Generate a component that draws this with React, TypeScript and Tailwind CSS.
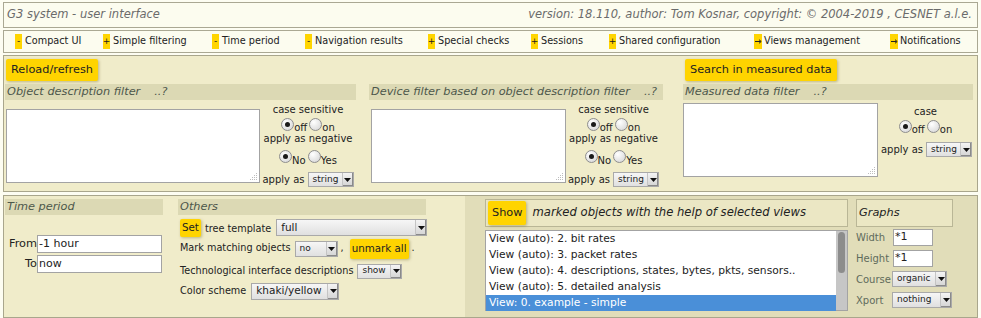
import React from 'react';

const nav = [
  { s: '-', t: 'Compact UI', w: 'w-[88px]' },
  { s: '+', t: 'Simple filtering', w: 'w-[109px]' },
  { s: '-', t: 'Time period', w: 'w-[93px]' },
  { s: '-', t: 'Navigation results', w: 'w-[123px]' },
  { s: '+', t: 'Special checks', w: 'w-[103px]' },
  { s: '+', t: 'Sessions', w: 'w-[78px]' },
  { s: '+', t: 'Shared configuration', w: 'w-[145px]' },
  { s: '→', t: 'Views management', w: 'w-[136px]' },
  { s: '→', t: 'Notifications', w: 'w-auto' },
];

const views = [
  'View (auto): 2. bit rates',
  'View (auto): 3. packet rates',
  'View (auto): 4. descriptions, states, bytes, pkts, sensors..',
  'View (auto): 5. detailed analysis',
];

function Select({ text, className, textCls = 'text-[9px]' }: { text: string; className: string; textCls?: string }) {
  return (
    <div className={`flex shrink-0 items-stretch border border-[#a9a9a9] bg-linear-to-b from-[#f6f6f6] to-[#e0e0e0] ${className}`}>
      <span className={`flex flex-1 items-center pl-[4px] whitespace-nowrap text-[#222] ${textCls}`}>{text}</span>
      <span className="flex w-[11px] items-center justify-center border-l border-[#c4c4c4] bg-linear-to-b from-[#f4f4f4] to-[#d4d4d4] shadow-[inset_-1px_-1px_0_#8a8a8a]">
        <svg width="7" height="4" viewBox="0 0 7 4">
          <path d="M0 0h7L3.5 4z" fill="#111" />
        </svg>
      </span>
    </div>
  );
}

const Radio = ({ on }: { on?: boolean }) => (
  <span className="inline-flex h-[13px] w-[13px] shrink-0 items-center justify-center rounded-full border border-[#8e8e8e] bg-[radial-gradient(circle_at_35%_30%,#ffffff,#d2d2d2)]">
    {on && <span className="h-[5px] w-[5px] rounded-full bg-[#1a1a1a]" />}
  </span>
);

function RadioPair({ a, b }: { a: string; b: string }) {
  return (
    <div className="flex items-center">
      <Radio on />
      <span className="mt-[7px] mr-[2px]">{a}</span>
      <Radio />
      <span className="mt-[7px]">{b}</span>
    </div>
  );
}

const Grip = () => (
  <svg className="absolute right-[1px] bottom-[1px]" width="8" height="8" viewBox="0 0 8 8">
    {[[6, 0], [4, 2], [6, 2], [2, 4], [4, 4], [6, 4], [0, 6], [2, 6], [4, 6], [6, 6]].map(([x, y], i) => (
      <rect key={i} x={x} y={y} width="1" height="1" fill="#bdbdbd" />
    ))}
  </svg>
);

const Area = ({ className }: { className: string }) => (
  <div className={`relative border border-[#a3a3a3] bg-white ${className}`}>
    <Grip />
  </div>
);

const Btn = ({ children, className = '' }: { children: React.ReactNode; className?: string }) => (
  <span className={`flex shrink-0 items-center rounded-[2px] bg-[#ffd400] whitespace-nowrap text-[#222] shadow-[1px_1px_3px_rgba(90,80,0,0.35)] ${className}`}>
    {children}
  </span>
);

const LabelBar = ({ children, className }: { children: React.ReactNode; className: string }) => (
  <div className={`flex h-[16px] items-center bg-[#dcd9b4] pl-[2px] whitespace-nowrap text-[11.3px] text-[#4d574b] italic ${className}`}>
    {children}
  </div>
);

function Controls({ className }: { className: string }) {
  return (
    <div className={`flex flex-col items-center pt-[4px] text-[10px] text-[#222] ${className}`}>
      <div className="h-[12px] leading-[12px]">case sensitive</div>
      <div className="flex h-[16px] items-center">
        <RadioPair a="off" b="on" />
      </div>
      <div className="h-[14px] leading-[14px]">apply as negative</div>
      <div className="flex h-[21px] items-center">
        <RadioPair a="No" b="Yes" />
      </div>
      <div className="mt-[5px] flex items-center gap-[3px]">
        apply as
        <Select text="string" className="h-[15px] w-[46px]" />
      </div>
    </div>
  );
}

export default function App() {
  return (
    <div className="h-[318px] w-[981px] overflow-hidden bg-[#fdfdf2] px-[3px] pt-[2px] font-['DejaVu_Sans',sans-serif] text-[#222]">
      <div className="flex h-[26px] items-center justify-between border border-[#aaa893] bg-[#fcfcef] pr-[5px] pl-[3px] text-[11.5px] text-[#6b6b6b] italic">
        <span>G3 system - user interface</span>
        <span>version: 18.110, author: Tom Kosnar, copyright: © 2004-2019 , CESNET a.l.e.</span>
      </div>

      <div className="mt-[2px] flex h-[23px] items-center border border-[#aaa893] bg-[#fcfcef] pl-[11px] text-[9.7px]">
        {nav.map((n) => (
          <div key={n.t} className={`flex items-center whitespace-nowrap ${n.w}`}>
            {n.s === '→' ? (
              <span className="mr-[2px] flex h-[15px] w-[8px] items-center justify-center bg-[#ffd500]">
                <svg width="7" height="5" viewBox="0 0 7 5">
                  <path d="M0 2.5h5.5M4 0.7l2.2 1.8L4 4.3" stroke="#222" strokeWidth="1" fill="none" />
                </svg>
              </span>
            ) : (
              <span className="mr-[3px] flex h-[15px] w-[7px] items-center justify-center bg-[#ffd500] text-[9px] leading-none">{n.s}</span>
            )}
            {n.t}
          </div>
        ))}
      </div>

      <div className="mt-[2px] flex h-[137px] border border-[#a9a68c] bg-[#f0ecca]">
        <div className="ml-[1px] flex w-[351px] flex-col">
          <div className="h-[28px] pt-[3px]">
            <Btn className="ml-[1px] h-[22px] w-fit px-[5px] text-[11.3px]">Reload/refresh</Btn>
          </div>
          <LabelBar className="w-[351px]">
            Object description filter<span className="ml-[14px]">..?</span>
          </LabelBar>
          <div className="flex">
            <Area className="mt-[9px] ml-[1px] h-[74px] w-[254px]" />
            <Controls className="w-[96px]" />
          </div>
        </div>

        <div className="ml-[13px] flex w-[294px] flex-col">
          <div className="h-[28px]" />
          <LabelBar className="w-[294px]">
            Device filter based on object description filter<span className="ml-[14px]">..?</span>
          </LabelBar>
          <div className="flex">
            <Area className="mt-[9px] ml-[2px] h-[74px] w-[195px]" />
            <Controls className="w-[95px]" />
          </div>
        </div>

        <div className="ml-[20px] flex w-[290px] flex-col">
          <div className="h-[28px] pt-[3px]">
            <Btn className="ml-[2px] h-[22px] w-fit px-[5px] text-[11.3px]">Search in measured data</Btn>
          </div>
          <LabelBar className="w-[290px]">
            Measured data filter<span className="ml-[14px]">..?</span>
          </LabelBar>
          <div className="flex">
            <Area className="mt-[3px] h-[74px] w-[195px]" />
            <div className="flex flex-1 flex-col items-center pt-[5px] text-[10px]">
              <div className="h-[13px] leading-[13px]">case</div>
              <div className="flex h-[16px] items-center">
                <RadioPair a="off" b="on" />
              </div>
              <div className="mt-[8px] flex items-center gap-[3px] pl-[2px]">
                apply as
                <Select text="string" className="h-[15px] w-[46px]" />
              </div>
            </div>
          </div>
        </div>
      </div>

      <div className="mt-[3px] flex h-[123px] border border-[#a9a68c] bg-[#f0ecca]">
        <div className="flex w-[461px] pt-[3px]">
          <div className="ml-[1px] w-[158px]">
            <LabelBar className="w-[158px]">Time period</LabelBar>
            <div className="mt-[20px] flex items-center text-[11.3px]">
              <span className="w-[32px] text-right">From</span>
              <div className="flex h-[18px] w-[125px] items-center border border-[#a3a3a3] bg-white pl-[1px] text-[11px]">-1 hour</div>
            </div>
            <div className="mt-[2px] flex items-center text-[11.3px]">
              <span className="w-[32px] text-right">To</span>
              <div className="flex h-[18px] w-[125px] items-center border border-[#a3a3a3] bg-white pl-[1px] text-[11px]">now</div>
            </div>
          </div>

          <div className="ml-[15px] w-[248px] text-[9.7px] whitespace-nowrap">
            <LabelBar className="w-[248px]">Others</LabelBar>
            <div className="mt-[4px] flex h-[19px] items-start">
              <Btn className="ml-[2px] h-[18px] px-[2px] text-[10.3px]">Set</Btn>
              <span className="mt-[3px] ml-[4px]">tree template</span>
              <Select text="full" textCls="text-[10.5px]" className="ml-[5px] h-[17px] w-[151px]" />
            </div>
            <div className="flex h-[21px] items-center pl-[2px]">
              Mark matching objects
              <Select text="no" className="ml-[4px] h-[16px] w-[43px]" />
              <span className="ml-[3px]">,</span>
              <Btn className="ml-[6px] h-[20px] px-[2px] text-[10.3px]">unmark all</Btn>
              <span className="ml-[3px]">.</span>
            </div>
            <div className="mt-[2px] flex h-[20px] items-center pl-[2px]">
              Technological interface descriptions
              <Select text="show" className="ml-[4px] h-[15px] w-[45px]" />
            </div>
            <div className="flex h-[20px] items-center pl-[2px]">
              Color scheme
              <Select text="khaki/yellow" textCls="text-[10.5px]" className="ml-[5px] h-[17px] w-[88px]" />
            </div>
          </div>
        </div>

        <div className="flex flex-1 bg-[#e1ddb9] pt-[3px]">
          <div className="ml-[20px] w-[363px]">
            <div className="flex h-[28px] items-center border border-[#b9b696] bg-[#ebe7c4] pl-[2px]">
              <Btn className="h-[24px] px-[4px] text-[11.3px]">Show</Btn>
              <span className="ml-[6px] text-[11.6px] italic">marked objects with the help of selected views</span>
            </div>
            <div className="mt-[3px] flex h-[81px] border border-[#a3a3a3] bg-white">
              <div className="flex-1 text-[10.7px]">
                {views.map((v) => (
                  <div key={v} className="h-[16px] pl-[3px] leading-[16px]">{v}</div>
                ))}
                <div className="h-[16px] bg-[#4a8fd8] pl-[3px] leading-[16px] text-white">View: 0. example - simple</div>
              </div>
              <div className="w-[11px] bg-[#c6c6c6] px-[2px] pt-[1px]">
                <div className="h-[41px] rounded-full bg-[#8c8c8c]" />
              </div>
            </div>
          </div>

          <div className="ml-[8px] w-[97px] text-[10px] text-[#5f6b5c]">
            <div className="flex h-[28px] items-center border border-[#b9b696] bg-[#ebe7c4] pl-[2px] text-[11.3px] text-[#222] italic">Graphs</div>
            <div className="mt-[1px] flex h-[18px] items-center">
              <span className="w-[37px]">Width</span>
              <div className="flex h-[17px] w-[40px] items-center border border-[#a3a3a3] bg-white pl-[1px] text-[11px] text-[#222]">*1</div>
            </div>
            <div className="mt-[3px] flex h-[18px] items-center">
              <span className="w-[37px]">Height</span>
              <div className="flex h-[17px] w-[40px] items-center border border-[#a3a3a3] bg-white pl-[1px] text-[11px] text-[#222]">*1</div>
            </div>
            <div className="mt-[3px] flex h-[18px] items-center">
              <span className="w-[36px]">Course</span>
              <Select text="organic" className="h-[16px] w-[55px]" />
            </div>
            <div className="mt-[3px] flex h-[18px] items-center">
              <span className="w-[36px]">Xport</span>
              <Select text="nothing" className="h-[16px] w-[60px]" />
            </div>
          </div>
        </div>
      </div>
    </div>
  );
}
